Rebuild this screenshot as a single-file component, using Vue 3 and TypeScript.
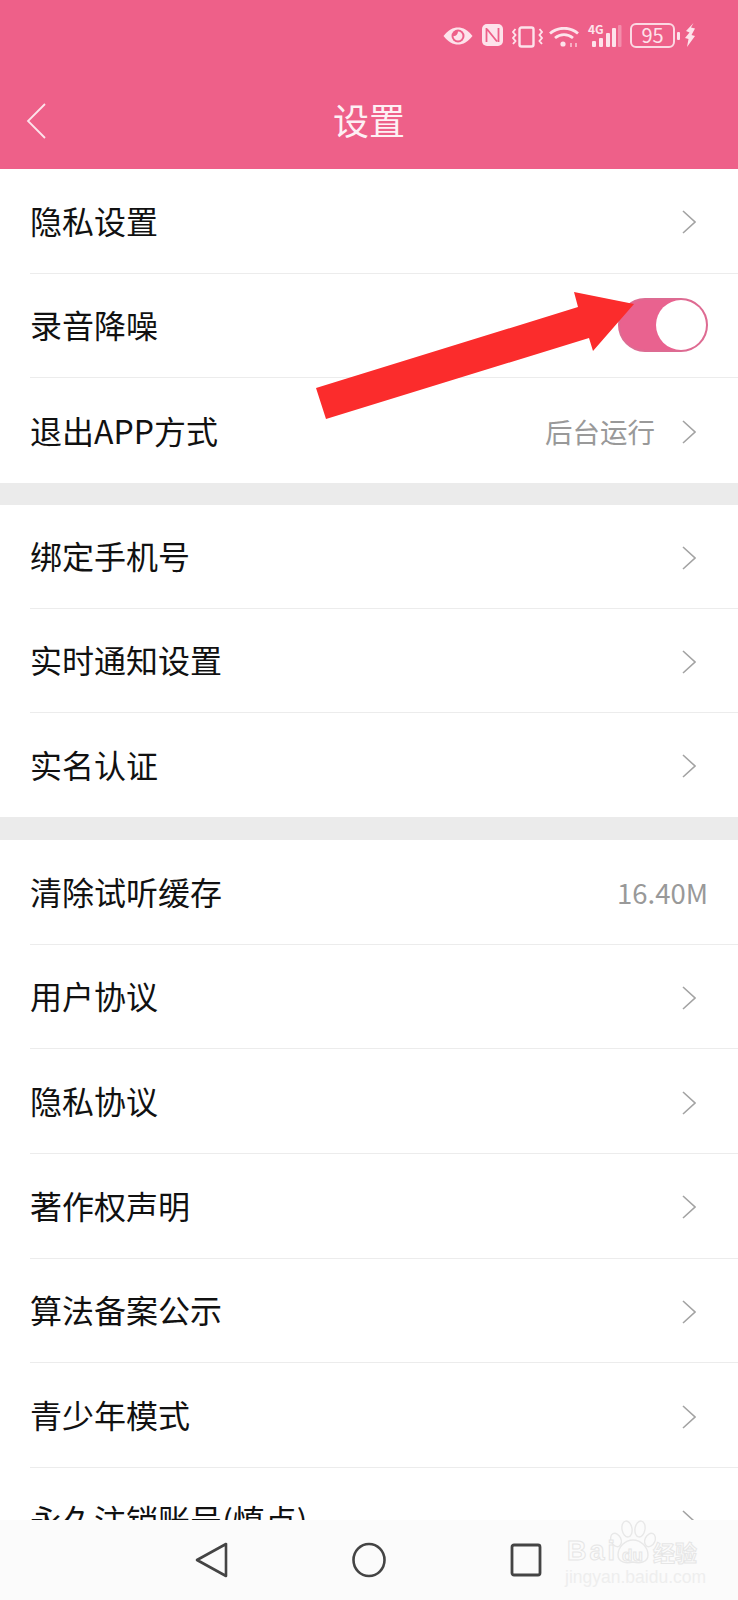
<script setup lang="ts">
interface Row {
  label: string;
  value?: string;
  toggle?: boolean;
  noArrow?: boolean;
}

const sections: Row[][] = [
  [
    { label: '隐私设置' },
    { label: '录音降噪', toggle: true, noArrow: true },
    { label: '退出APP方式', value: '后台运行' },
  ],
  [
    { label: '绑定手机号' },
    { label: '实时通知设置' },
    { label: '实名认证' },
  ],
  [
    { label: '清除试听缓存', value: '16.40M', noArrow: true },
    { label: '用户协议' },
    { label: '隐私协议' },
    { label: '著作权声明' },
    { label: '算法备案公示' },
    { label: '青少年模式' },
    { label: '永久注销账号(慎点)' },
  ],
];
</script>

<template>
  <div class="page">
    <header class="header">
      <div class="status">
        <svg class="eye" width="30" height="18" viewBox="0 0 30 18">
          <path d="M0.500 9C5 3 10 0.500 15 0.500S25 3 29.500 9C25 15 20 17.500 15 17.500S5 15 0.500 9z" fill="#fde3eb" />
          <circle cx="15" cy="9" r="6.500" fill="#ee6089" />
          <path d="M15 4.500a4.500 4.500 0 1 1-4.500 4.500c2 .6 4.500-1.500 4.500-4.500z" fill="#fde3eb" />
        </svg>
        <svg class="nfc" width="21" height="22" viewBox="0 0 21 22">
          <rect width="21" height="22" rx="5" fill="#fde3eb" />
          <path d="M4.500 4v14M4.500 4.500L15 17.500M16.500 4v14" fill="none" stroke="#ee6089" stroke-width="1.800" />
        </svg>
        <svg class="vibrate" width="31" height="22" viewBox="0 0 31 22" fill="none" stroke="#fde3eb">
          <rect x="7.500" y="1.500" width="14" height="19" rx="2" stroke-width="2.400" />
          <path d="M3.500 3L1 6l2.500 3L1 12l2.500 3L1 18M27.500 3L30 6l-2.500 3 2.500 3-2.500 3 2.500 3" stroke-width="1.900" />
        </svg>
        <svg class="wifi" width="30" height="20" viewBox="0 0 30 20" fill="none" stroke="#fde3eb" stroke-width="2.800">
          <path d="M1 6.500C9 -0.500 21 -0.500 29 6.500" />
          <path d="M6 11c5.500-4.500 12.500-4.500 18 0" />
          <circle cx="14" cy="17" r="2.600" fill="#fde3eb" stroke="none" />
          <path d="M22 16v4M27 16v4" stroke-width="1.200" />
        </svg>
        <div class="signal">
          <span class="net">4G</span>
          <svg width="34" height="22" viewBox="0 0 34 22" fill="#fde3eb">
            <rect x="4" y="16" width="4" height="6" rx="1" />
            <rect x="11" y="13" width="4" height="9" rx="1" />
            <rect x="18" y="8" width="4" height="14" rx="1" />
            <rect x="24" y="3" width="4" height="19" rx="1" />
            <rect x="30" y="0" width="3.500" height="22" rx="1" opacity="0.35" />
          </svg>
        </div>
        <div class="battery">
          <span class="battery-box">95</span>
          <i class="battery-tip"></i>
        </div>
        <svg class="bolt" width="10" height="24" viewBox="0 0 10 24">
          <path d="M8.500 0L1 8l3.500 1.500L0 15l3.500 1L2 24l8-11-3.500-1L10 5.500 6 4.500z" fill="#fde3eb" />
        </svg>
      </div>
      <div class="titlebar">
        <svg class="back" width="20" height="36" viewBox="0 0 20 36">
          <path d="M19 1L2 18l17 17" fill="none" stroke="#fde3eb" stroke-width="1.800" />
        </svg>
        <h1>设置</h1>
      </div>
    </header>

    <main class="list">
      <section v-for="(rows, i) in sections" :key="i" class="section">
        <div v-for="row in rows" :key="row.label" class="row">
          <span class="label">{{ row.label }}</span>
          <span v-if="row.value" class="value">{{ row.value }}</span>
          <span v-if="row.toggle" class="toggle"><i></i></span>
          <svg v-if="!row.noArrow" class="chevron" width="14" height="24" viewBox="0 0 14 24">
            <path d="M1 1l12 11L1 23" fill="none" stroke="#a3a3a3" stroke-width="1.600" />
          </svg>
        </div>
      </section>
    </main>

    <nav class="nav">
      <svg width="34" height="36" viewBox="0 0 34 36">
        <path d="M31 2v32L2 18z" fill="none" stroke="#444" stroke-width="2.600" stroke-linejoin="round" />
      </svg>
      <svg width="34" height="36" viewBox="0 0 34 36">
        <ellipse cx="17" cy="18" rx="15.500" ry="16" fill="none" stroke="#444" stroke-width="2.600" />
      </svg>
      <svg width="34" height="36" viewBox="0 0 34 36">
        <rect x="3" y="3" width="28" height="30" rx="2" fill="none" stroke="#444" stroke-width="2.800" />
      </svg>
    </nav>

    <svg class="arrow" width="738" height="440" viewBox="0 0 738 440">
      <polygon points="316,388 326,419 589,338 593,351 634,304 574,292 578,307" fill="#fb2c2c" />
    </svg>

    <div class="mark">
      <svg class="paw" width="50" height="48" viewBox="0 0 50 48" fill="#fbfbfb" stroke="#e8e8e8" stroke-width="1.400">
        <ellipse cx="8" cy="20" rx="5" ry="7" transform="rotate(-25 8 20)" />
        <ellipse cx="19" cy="9" rx="5" ry="8" transform="rotate(-10 19 9)" />
        <ellipse cx="32" cy="9" rx="5" ry="8" transform="rotate(10 32 9)" />
        <ellipse cx="42" cy="20" rx="5" ry="7" transform="rotate(25 42 20)" />
        <path d="M25 20c-8 0-15 7-15 15 0 7 8 9 15 7 7 2 15 0 15-7 0-8-7-15-15-15z" />
      </svg>
      <span class="mark-bai">Bai</span>
      <span class="mark-du">du</span>
      <span class="mark-cn">经验</span>
      <span class="mark-sub">jingyan.baidu.com</span>
    </div>
  </div>
</template>

<style scoped>
.page {
  position: relative;
  width: 738px;
  height: 1600px;
  display: flex;
  flex-direction: column;
  overflow: hidden;
  background: #fff;
  font-family: "Noto Sans CJK SC", "Noto Sans", sans-serif;
}

.header {
  height: 169px;
  flex: none;
  background: #ee6089;
  color: #fdeef3;
}

.status {
  height: 70px;
  padding: 23px 43px 0 0;
  box-sizing: border-box;
  display: flex;
  justify-content: flex-end;
  align-items: flex-start;
}

.eye {
  margin-top: 4px;
}

.nfc {
  margin: 1px 0 0 9px;
}

.vibrate {
  margin: 3px 0 0 9px;
}

.wifi {
  margin: 4px 0 0 6px;
}

.signal {
  position: relative;
  width: 34px;
  height: 22px;
  margin: 2px 0 0 9px;
}

.signal svg {
  display: block;
}

.net {
  position: absolute;
  left: 0;
  top: -3px;
  font-size: 12px;
  font-weight: 700;
  color: #fde3eb;
  line-height: 14px;
}

.battery {
  display: flex;
  align-items: center;
  height: 25px;
  margin-left: 8px;
}

.battery-box {
  width: 45px;
  height: 25px;
  box-sizing: border-box;
  border: 2px solid #fbd9e3;
  border-radius: 6px;
  text-align: center;
  font-size: 20px;
  line-height: 20px;
  color: #fde3eb;
}

.battery-tip {
  width: 3px;
  height: 8px;
  margin-left: 2px;
  border-radius: 1px;
  background: #fde3eb;
}

.bolt {
  margin-left: 5px;
}

.titlebar {
  position: relative;
  height: 99px;
  display: flex;
  align-items: center;
  justify-content: center;
}

.back {
  position: absolute;
  left: 26px;
  top: 33px;
}

.titlebar h1 {
  margin: 0 0 2px;
  font-size: 36px;
  line-height: 50px;
  font-weight: 400;
  color: #fdf0f4;
}

.list {
  flex: 1;
  min-height: 0;
  overflow: hidden;
  background: #ebebeb;
}

.section {
  background: #fff;
  margin-bottom: 22px;
}

.section:nth-child(2) {
  margin-bottom: 23px;
}

.row {
  position: relative;
  height: 104.670px;
  box-sizing: border-box;
  margin-left: 30px;
  padding-right: 30px;
  border-bottom: 1px solid #ececec;
  display: flex;
  align-items: center;
}

.section:nth-child(2) .row {
  height: 104px;
}

.row:last-child {
  border-bottom: none;
}

.label {
  flex: 1;
  margin-top: -2px;
  font-size: 32px;
  color: #111;
}

.value {
  font-size: 27.500px;
  color: #999;
}

.chevron {
  margin: 3px 12px 0 27px;
}

.toggle {
  width: 90px;
  height: 54px;
  box-sizing: border-box;
  border-radius: 27px;
  border: 2px solid #dd6b92;
  background: #e9628f;
  display: flex;
  justify-content: flex-end;
}

.toggle i {
  width: 50px;
  height: 50px;
  border-radius: 50%;
  background: #fff;
}

.nav {
  position: absolute;
  left: 0;
  right: 0;
  bottom: 0;
  height: 80px;
  padding-top: 22px;
  box-sizing: border-box;
  background: #fbfbfb;
  display: flex;
  justify-content: center;
  align-items: flex-start;
  gap: 123px;
}

.arrow {
  position: absolute;
  left: 0;
  top: 0;
}

.mark {
  position: absolute;
  left: 565px;
  top: 1520px;
  width: 135px;
  height: 66px;
  color: #fbfbfb;
  font-family: "Liberation Sans", "Noto Sans CJK SC", sans-serif;
  white-space: nowrap;
}

.paw {
  position: absolute;
  left: 43px;
  top: 0;
}

.mark-bai,
.mark-du,
.mark-cn {
  position: absolute;
  font-weight: 700;
  -webkit-text-stroke: 1px #e6e6e6;
}

.mark-bai {
  left: 2px;
  top: 16px;
  font-size: 27px;
  line-height: 30px;
  letter-spacing: 3px;
}

.mark-du {
  left: 57px;
  top: 26px;
  font-size: 17px;
  line-height: 20px;
}

.mark-cn {
  left: 88px;
  top: 16px;
  font-size: 22px;
  line-height: 30px;
  font-family: "Noto Sans CJK SC", sans-serif;
}

.mark-sub {
  position: absolute;
  left: 0;
  top: 48px;
  font-size: 17.500px;
  line-height: 18px;
  color: #eeeeee;
}
</style>
